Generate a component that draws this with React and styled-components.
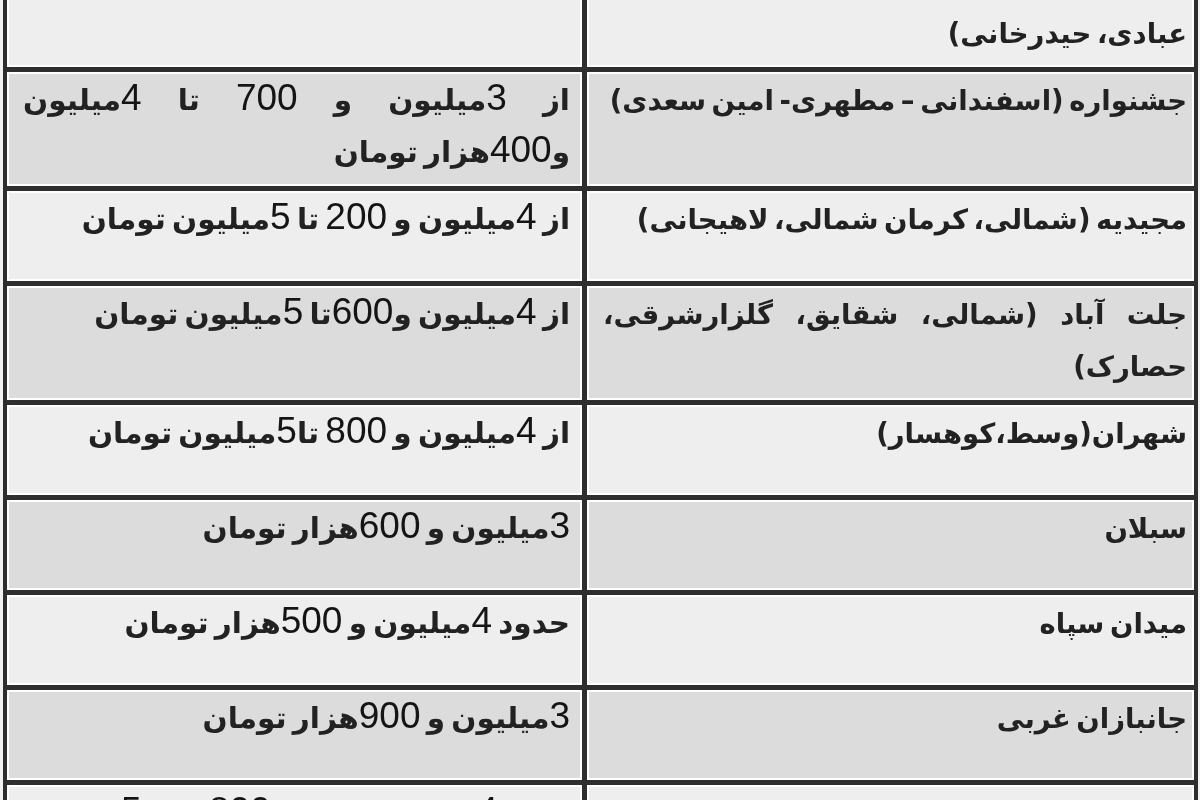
import React from "react";
import styled, { createGlobalStyle } from "styled-components";

const GlobalStyle = createGlobalStyle`
  html, body {
    margin: 0;
    padding: 0;
    background: #f2f2f2;
    overflow: hidden;
  }
  #root {
    height: 800px;
    overflow: hidden;
  }
`;

const Page = styled.div`
  height: 800px;
  overflow: hidden;
  padding: 0 2px 0 3px;
  box-sizing: border-box;
`;

const Table = styled.div`
  direction: rtl;
  display: grid;
  grid-template-columns: 607px 1fr;
  gap: 5px;
  padding: 4px;
  margin-top: -51px;
  background: #2e2e2e;
  font-family: "DejaVu Sans", "Liberation Sans", sans-serif;
  font-weight: bold;
  word-spacing: -4px;
  color: #222222;
  filter: blur(0.4px);
`;

const Cell = styled.div`
  box-sizing: border-box;
  min-height: 90px;
  border: 2px solid #ffffff;
  background: ${(p) => (p.$shade ? "#dcdcdc" : "#eeeeee")};
  padding: 0 ${(p) => p.$padStart}px 6px 14px;
  font-size: ${(p) => p.$size}px;
  line-height: 52px;
  text-align: right;
`;

const Line = styled.div`
  white-space: nowrap;
  text-align: right;
  text-align-last: ${(p) => (p.$justify ? "justify" : "right")};
`;

const Num = styled.span`
  font-family: "Liberation Sans", Arial, sans-serif;
  font-size: 37px;
  font-weight: normal;
  line-height: 1;
  word-spacing: 0;
  color: #141414;
`;

const rows = [
  {
    place: [
      { t: "نارمک (گلبرگ، دردشت، سمنگان، آیت،", j: true },
      { t: "عبادی، حیدرخانی)" },
    ],
    price: [],
  },
  {
    place: [{ t: "جشنواره (اسفندانی – مطهری- امین سعدی)" }],
    price: [
      { t: "از 3میلیون و 700 تا 4میلیون", j: true },
      { t: "و400هزار تومان" },
    ],
  },
  {
    place: [{ t: "مجیدیه (شمالی، کرمان شمالی، لاهیجانی)" }],
    price: [{ t: "از 4میلیون و 200 تا 5میلیون تومان" }],
  },
  {
    place: [
      { t: "جلت آباد (شمالی، شقایق، گلزارشرقی،", j: true },
      { t: "حصارک)" },
    ],
    price: [{ t: "از 4میلیون و600تا 5میلیون تومان" }],
  },
  {
    place: [{ t: "شهران(وسط،کوهسار)" }],
    price: [{ t: "از 4میلیون و 800 تا5میلیون تومان" }],
  },
  {
    place: [{ t: "سبلان" }],
    price: [{ t: "3میلیون و 600هزار تومان" }],
  },
  {
    place: [{ t: "میدان سپاه" }],
    price: [{ t: "حدود 4میلیون و 500هزار تومان" }],
  },
  {
    place: [{ t: "جانبازان غربی" }],
    price: [{ t: "3میلیون و 900هزار تومان" }],
  },
  {
    place: [{ t: "تهرانپارس (فلکه اول، دوم، سوم)" }],
    price: [
      { t: "از 4میلیون و 800تا 5میلیون", j: true },
      { t: "تومان" },
    ],
  },
];

function Text({ t }) {
  return t.split(/(\d+)/).map((part, i) =>
    /^\d+$/.test(part) ? <Num key={i}>{part}</Num> : part
  );
}

function Lines({ items }) {
  return items.map((l, i) => (
    <Line key={i} $justify={l.j}>
      <Text t={l.t} />
    </Line>
  ));
}

export default function App() {
  return (
    <Page>
      <GlobalStyle />
      <Table>
        {rows.map((r, i) => (
          <React.Fragment key={i}>
            <Cell $shade={i % 2 === 1} $padStart={5} $size={27.5}>
              <Lines items={r.place} />
            </Cell>
            <Cell $shade={i % 2 === 1} $padStart={10} $size={29.5}>
              <Lines items={r.price} />
            </Cell>
          </React.Fragment>
        ))}
      </Table>
    </Page>
  );
}
